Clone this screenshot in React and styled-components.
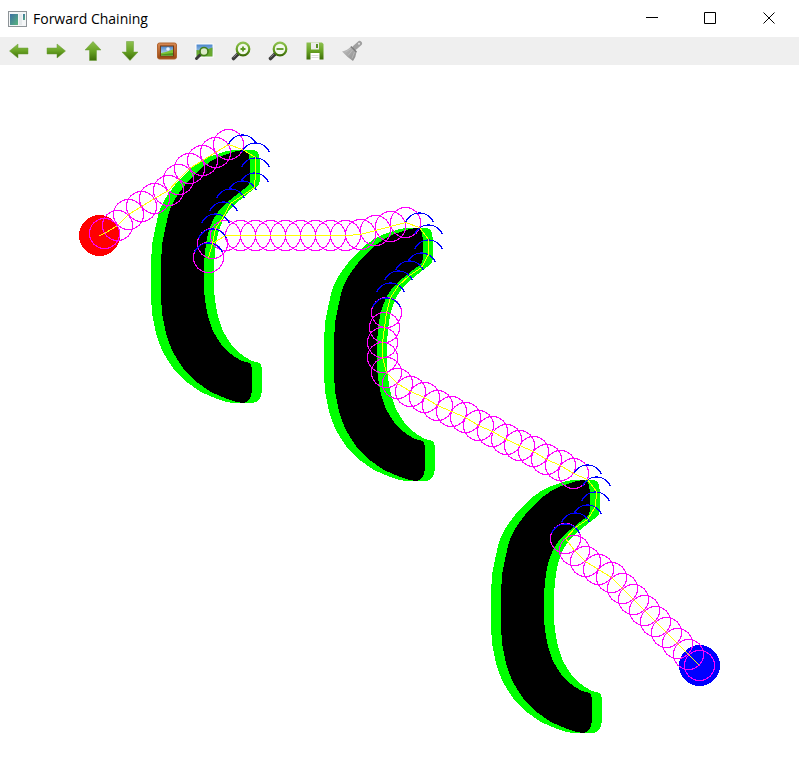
import React from "react";
import styled, { createGlobalStyle } from "styled-components";

const GlobalStyle = createGlobalStyle`
  * { box-sizing: border-box; }
  body {
    margin: 0;
    background: #ffffff;
    font-family: "Open Sans", "Noto Sans", sans-serif;
  }
`;

const Window = styled.main`
  display: flex;
  flex-direction: column;
  min-height: 100vh;
  background: #ffffff;
`;

const TitleBar = styled.header`
  display: flex;
  align-items: center;
  height: 37px;
  padding-left: 8px;
`;

const Title = styled.h1`
  flex: 1;
  margin: 0 0 0 6px;
  font-size: 14px;
  font-weight: 400;
  line-height: 20px;
  color: #000000;
  white-space: nowrap;
`;

const CaptionButton = styled.button`
  display: flex;
  align-items: center;
  justify-content: center;
  width: 59px;
  height: 37px;
  padding: 0;
  border: 0;
  background: transparent;
  &:hover { background: ${(p) => (p.$danger ? "#e81123" : "#e5e5e5")}; }
`;

const ToolBar = styled.nav`
  display: flex;
  align-items: center;
  height: 28px;
  background: #efefef;
`;

const ToolButton = styled.button`
  display: flex;
  align-items: center;
  justify-content: center;
  width: 37px;
  height: 28px;
  padding: 0;
  border: 0;
  background: transparent;
  &:hover { background: #dceaf5; }
`;

const Canvas = styled.svg`
  display: block;
  width: 100%;
  height: auto;
`;

const Swatches = styled.svg`
  position: absolute;
`;

const Gradients = () => (
  <Swatches width="0" height="0" aria-hidden="true">
    <defs>
      <linearGradient id="leaf" x1="0" y1="0" x2="0" y2="1">
        <stop offset="0" stopColor="#8dc04f" />
        <stop offset="0.5" stopColor="#68a324" />
        <stop offset="1" stopColor="#3d6d08" />
      </linearGradient>
      <linearGradient id="wood" x1="0" y1="0" x2="0" y2="1">
        <stop offset="0" stopColor="#d98a55" />
        <stop offset="1" stopColor="#98460f" />
      </linearGradient>
      <linearGradient id="sky" x1="0" y1="0" x2="0" y2="1">
        <stop offset="0" stopColor="#4a86cc" />
        <stop offset="1" stopColor="#d4eaf8" />
      </linearGradient>
      <linearGradient id="steel" x1="0" y1="0" x2="1" y2="1">
        <stop offset="0" stopColor="#c4c4c4" />
        <stop offset="1" stopColor="#8a8a8a" />
      </linearGradient>
      <linearGradient id="screen" x1="0" y1="0" x2="1" y2="1">
        <stop offset="0" stopColor="#3c70a4" />
        <stop offset="1" stopColor="#58b47c" />
      </linearGradient>
    </defs>
  </Swatches>
);

const Icon = ({ children }) => (
  <svg width="22" height="22" viewBox="0 0 22 22" aria-hidden="true">{children}</svg>
);

const Arrow = ({ d }) => (
  <Icon><path d={d} fill="url(#leaf)" strokeLinejoin="round" stroke="#6b9e34" strokeWidth="0.5" /></Icon>
);

const Lens = ({ children }) => (
  <Icon>
    <path d="M3.5 18.500 L8 14" stroke="#3a3a3a" strokeWidth="3.600" strokeLinecap="round" />
    <path d="M3.400 17.500 L7 13.900" stroke="#8a8a8a" strokeWidth="1" />
    <circle cx="13" cy="9" r="6.300" fill="#f3f8ec" stroke="url(#leaf)" strokeWidth="2.200" />
    {children}
  </Icon>
);

const TOOLS = [
  ["Pan left", <Arrow d="M1.500 11 L10 4 V8 H20 V14 H10 V18 Z" />],
  ["Pan right", <Arrow d="M20.500 11 L12 4 V8 H2 V14 H12 V18 Z" />],
  ["Pan up", <Arrow d="M11 1.500 L19 10 H14.500 V20.500 H7.500 V10 H3 Z" />],
  ["Pan down", <Arrow d="M11 20.500 L19 12 H14.500 V1.500 H7.500 V12 H3 Z" />],
  ["Original size", (
    <Icon>
      <rect x="1.500" y="3" width="19" height="16" rx="2" fill="url(#wood)" stroke="#b0642f" />
      <rect x="4.500" y="6" width="13" height="10" fill="url(#sky)" stroke="#713a15" />
      <circle cx="12" cy="9" r="1.800" fill="#ffffff" opacity="0.850" />
      <path d="M5 13 Q11 12 17 9.500 V15.500 H5 Z" fill="#7cc433" />
      <path d="M5 14.500 L17 13 V15.500 H5 Z" fill="#4b951f" />
    </Icon>
  )],
  ["Fit image to window", (
    <Icon>
      <rect x="2.500" y="3.500" width="18" height="14" fill="#ffffff" />
      <rect x="3.500" y="4.500" width="16" height="12" fill="url(#sky)" />
      <path d="M3.500 10 Q12 11 19.500 7.500 V16.500 H3.500 Z" fill="#68a92e" />
      <path d="M3.500 18.500 L7 15" stroke="#3a3a3a" strokeWidth="3" strokeLinecap="round" />
      <circle cx="11" cy="11.500" r="4" fill="#dcebc8" stroke="#438019" strokeWidth="1.600" />
    </Icon>
  )],
  ["Zoom in", <Lens><path d="M10.500 9 H15.500 M13 6.500 V11.500" stroke="#5b9822" strokeWidth="1.800" /></Lens>],
  ["Zoom out", <Lens><path d="M9.500 9 H16.500" stroke="#5b9822" strokeWidth="1.800" /></Lens>],
  ["Save", (
    <Icon>
      <path d="M2.500 2.500 H18 L19.500 4 V19.500 H2.500 Z" fill="url(#leaf)" />
      <path d="M7 2.500 H15 V9.500 H7 Z" fill="#ececec" />
      <rect x="12" y="4" width="2" height="4" fill="#5b8e26" />
      <path d="M6.500 13 H15.500 V20 H6.500 Z" fill="#ffffff" />
      <path d="M7.500 15.500 H14.500 M7.500 17.500 H14.500" stroke="#dddddd" />
    </Icon>
  )],
  ["Clear", (
    <Icon>
      <path d="M14 7.500 L18.500 3.500" stroke="#a0a0a0" strokeWidth="5" strokeLinecap="round" />
      <circle cx="18" cy="3.800" r="1" fill="#e5e5e5" />
      <path d="M10 6.500 L15.500 12 Q15 17 12 21 Q6 17 1 11.500 Q6.500 10.500 10 6.500 Z" fill="url(#steel)" />
      <path d="M10 8.500 L4.500 12 M11.500 10 L7 15.500 M13.500 12 L11 18.500" stroke="#c8c8c8" strokeWidth="0.600" />
      <path d="M10 6.500 L15.500 12" stroke="#7a7a7a" strokeWidth="1.200" />
    </Icon>
  )],
];

const BODY =
  "M244 150 Q248 151 249 156 L250 162 V178 Q250 184 247 187 L240 192 L230 200 L224 205 L218 212 L214 218 L211 225 L208 234 L206 243 L205 253 L204 263 V290 L205 299 L206 307 L208 316 L210 323 L213 331 L217 338 L221 344 L227 351 L235 357 L242 361 L250 363 Q252 366 252 371 V388 Q252 397 247 402 L242 403 L233 401 L225 398 L211 392 L198 383 L191 377 L185 371 L179 362 L173 352 L169 343 L166 333 L164 323 L162 313 L161 297 V263 L162 245 L164 234 L166 225 L168 216 L171 207 L175 199 L179 193 L188 181 L200 169 L211 161 L219 157 L227 154 L236 151 Z";

const SHIFTS = [-10, -5, 0, 5, 10];
const OBSTACLES = [[0, 0], [173, 78], [340, 330]];

const Obstacle = ({ at: [x, y] }) => (
  <g transform={`translate(${x} ${y})`}>
    {SHIFTS.map((s) => (
      <path key={s} d={BODY} transform={`translate(${s} 0)`} fill="#00ff00" />
    ))}
    <path d={BODY} fill="#000000" />
  </g>
);

// Each step is [x, y, kind]: m = free move, b = boundary, mb = both.
const STEPS = [
  [104, 233, "m"], [117, 225, "m"], [128, 214, "m"], [141, 206, "m"], [154, 198, "m"],
  [168, 190, "m"], [178, 179, "m"], [189, 168, "m"], [202, 160, "m"], [215, 152, "m"],
  [228, 144, "m"], [242, 149, "b"], [255, 157, "b"], [255, 172, "b"], [254, 187, "b"],
  [242, 195, "b"], [230, 203, "b"], [223, 216, "b"], [215, 228, "b"], [212, 243, "mb"],
  [208, 257, "mb"], [212, 243, "mb"], [225, 235, "m"], [240, 235, "m"], [255, 235, "m"],
  [270, 235, "m"], [285, 235, "m"], [300, 235, "m"], [315, 235, "m"], [330, 235, "m"],
  [345, 235, "m"], [360, 234, "m"], [375, 230, "m"], [390, 226, "m"], [405, 222, "m"],
  [419, 227, "b"], [428, 239, "b"], [428, 254, "b"], [421, 267, "b"], [409, 275, "b"],
  [398, 285, "b"], [390, 297, "b"], [386, 312, "mb"], [384, 327, "m"], [382, 342, "m"],
  [382, 357, "m"], [386, 372, "m"], [397, 383, "m"], [410, 391, "m"], [424, 397, "m"],
  [437, 405, "m"], [451, 411, "m"], [465, 417, "m"], [478, 425, "m"], [492, 431, "m"],
  [506, 439, "m"], [519, 445, "m"], [533, 451, "m"], [546, 459, "m"], [560, 465, "m"],
  [573, 473, "m"], [587, 479, "b"], [596, 491, "b"], [595, 506, "b"], [587, 519, "b"],
  [575, 527, "b"], [565, 538, "mb"], [574, 550, "m"], [585, 561, "m"], [598, 569, "m"],
  [611, 577, "m"], [622, 588, "m"], [633, 599, "m"], [644, 610, "m"], [655, 621, "m"],
  [666, 632, "m"], [677, 643, "m"], [688, 654, "m"], [699, 665, "m"],
];

const ROUTE = [[99, 235], ...STEPS].map(([x, y]) => `${x},${y}`).join(" ");

const Simulation = () => (
  <Canvas viewBox="0 65 799 699" role="img" aria-label="Robot path around three obstacles" shapeRendering="crispEdges">
    {OBSTACLES.map((at) => <Obstacle key={at[0]} at={at} />)}
    <g transform="translate(0.5 0.5)" fill="none" strokeWidth="1.250">
      <circle cx="99" cy="235" r="20" fill="#ff0000" stroke="#ff0000" strokeWidth="1" />
      <circle cx="699" cy="665" r="20" fill="#0000ff" stroke="#0000ff" strokeWidth="1" />
      {STEPS.filter((s) => s[2].includes("m")).map(([x, y], i) => (
        <circle key={i} cx={x} cy={y} r="15" stroke="#ff00ff" />
      ))}
      {STEPS.filter((s) => s[2].includes("b")).map(([x, y], i) => (
        <path key={i} d={`M${x - 14} ${y - 5} A15 15 0 0 1 ${x + 14} ${y - 5}`} stroke="#0000ff" />
      ))}
      <polyline points={ROUTE} stroke="#ffff00" strokeWidth="1" />
    </g>
  </Canvas>
);

const AppIcon = () => (
  <svg width="19" height="16" viewBox="0 0 19 16" aria-hidden="true">
    <rect x="0.5" y="0.5" width="18" height="15" fill="#f4f6f7" stroke="#8e9498" />
    <rect x="2" y="3" width="8" height="11" fill="url(#screen)" />
    <rect x="11" y="3" width="3" height="11" fill="#e5e9eb" />
    <rect x="15" y="3" width="2" height="6" fill="url(#screen)" />
  </svg>
);

const Caption = ({ d }) => (
  <svg width="13" height="13" viewBox="0 0 13 13" aria-hidden="true">
    <path d={d} fill="none" stroke="#000000" strokeWidth="1" />
  </svg>
);

export default function App() {
  return (
    <Window>
      <GlobalStyle />
      <Gradients />
      <TitleBar>
        <AppIcon />
        <Title>Forward Chaining</Title>
        <CaptionButton aria-label="Minimize"><Caption d="M1 5.5 H13" /></CaptionButton>
        <CaptionButton aria-label="Maximize"><Caption d="M0.5 0.5 H11.5 V11.5 H0.5 Z" /></CaptionButton>
        <CaptionButton aria-label="Close" $danger><Caption d="M0.5 0.5 L11.5 11.5 M11.5 0.5 L0.5 11.5" /></CaptionButton>
      </TitleBar>
      <ToolBar aria-label="Image tools">
        {TOOLS.map(([label, icon]) => (
          <ToolButton key={label} aria-label={label} title={label}>{icon}</ToolButton>
        ))}
      </ToolBar>
      <Simulation />
    </Window>
  );
}
